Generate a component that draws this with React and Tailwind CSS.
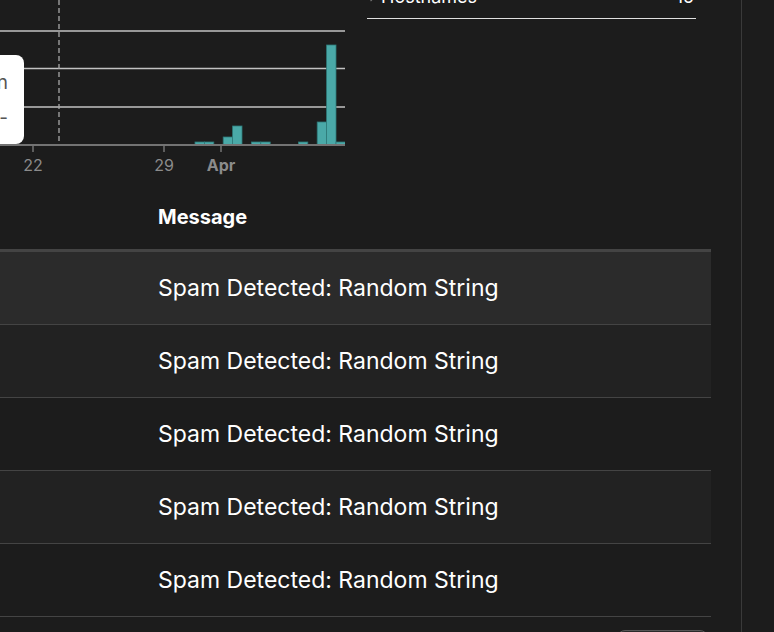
import React from 'react';
import { ChevronRight } from 'lucide-react';

const BIN = 9.4;
const START = 195;
// bar heights by bin index, counted from START
const bars = [
  [0, 3], [1, 3], [3, 8], [4, 19], [6, 3], [7, 3], [11, 3], [13, 23], [14, 100], [15, 3],
];

const rows = Array.from({ length: 5 }, (_, i) => ({ id: i, message: 'Spam Detected: Random String' }));

const rowBg = ['bg-[#2b2b2b]', 'bg-[#222222]', 'bg-[#1c1c1c]', 'bg-[#222222]', 'bg-[#1c1c1c]'];

const Chart = () => (
  <div className="relative w-[345px] h-[180px] shrink-0">
    <svg width="345" height="180" className="block">
      {[31, 68.5, 107].map((y) => (
        <line key={y} x1="0" x2="345" y1={y} y2={y} stroke="#c2c2c2" strokeWidth="1.6" />
      ))}
      <line x1="59" x2="59" y1="0" y2="145" stroke="#a8a8a8" strokeWidth="1.3" strokeDasharray="5 3" />
      {bars.map(([i, h]) => (
        <rect
          key={i}
          x={START + i * BIN}
          y={145 - h}
          width={BIN}
          height={h}
          fill="#4aa9a8"
          stroke="#2e7a79"
          strokeWidth="0.8"
        />
      ))}
      <line x1="0" x2="345" y1="145" y2="145" stroke="#737373" strokeWidth="2" />
      {[33, 164, 221].map((x) => (
        <line key={x} x1={x} x2={x} y1="145" y2="152" stroke="#737373" strokeWidth="1.5" />
      ))}
      <g fontFamily="Inter, 'Liberation Sans', sans-serif" fontSize="16" fill="#8b8b8b" textAnchor="middle">
        <text x="33" y="171">22</text>
        <text x="164" y="171">29</text>
        <text x="221" y="171" fontWeight="700">Apr</text>
      </g>
    </svg>
    <div className="absolute right-[321px] top-[55px] w-[120px] h-[89px] bg-white rounded-lg pr-[16px] pt-[10px] text-right text-[#555555] text-[19px] leading-[35px] font-['Inter','Liberation_Sans',sans-serif]">
      <div>Detection</div>
      <div>-</div>
    </div>
  </div>
);

const HostPanel = () => (
  <div className="ml-[22px] w-[329px] -mt-[12px]">
    <div className="flex items-end justify-between border-b-[1.5px] border-[#e0e0e0] pb-[12px] text-white text-[18px] leading-none">
      <div className="flex items-center gap-[2px]">
        <ChevronRight className="w-[13px] h-[13px] text-[#777777] -ml-[1px]" />
        <span>Hostnames</span>
      </div>
      <span className="pr-[2px]">15</span>
    </div>
  </div>
);

export default function App() {
  return (
    <div className="h-[632px] w-[774px] overflow-hidden bg-[#1c1c1c] font-['Inter','Liberation_Sans',sans-serif]">
      <div className="flex h-full">
        <div className="w-[742px] shrink-0 border-r border-[#3a3a3a]">
          <div className="flex items-start">
            <Chart />
            <HostPanel />
          </div>
          <div className="w-[711px]">
            <div className="flex h-[72px] border-b-[3px] border-[#444444] pt-[26px]">
              <div className="w-[158px] shrink-0" />
              <div className="text-white text-[20px] leading-[22px] font-bold">Message</div>
            </div>
            {rows.map((row, i) => (
              <div key={row.id} className={`flex items-center h-[73px] border-b border-[#444444] ${rowBg[i]}`}>
                <div className="w-[158px] shrink-0" />
                <div className="text-white text-[23px] leading-[28px]">{row.message}</div>
              </div>
            ))}
            <div className="flex justify-end pr-[3px] mt-[13px]">
              <div className="w-[91px] h-[34px] rounded-lg border border-[#555555] bg-[#2a2a2a]" />
            </div>
          </div>
        </div>
        <div className="flex-1" />
      </div>
    </div>
  );
}
